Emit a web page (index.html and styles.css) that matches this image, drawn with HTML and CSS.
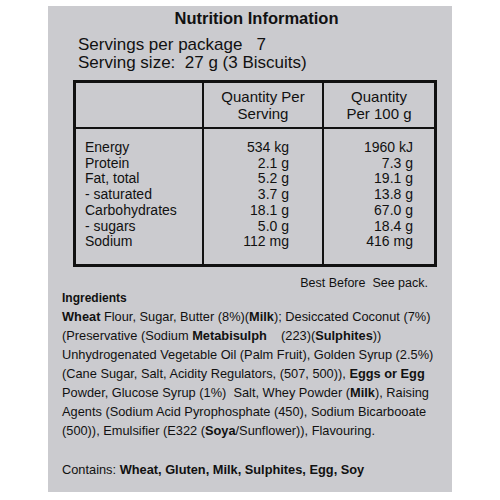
FILE: index.html
```html
<!DOCTYPE html>
<html lang="en">
<head>
  <meta charset="UTF-8">
  <title>Nutrition Information</title>
  <link rel="stylesheet" href="styles.css">
</head>
<body>

<div class="label">
  <h1>Nutrition Information</h1>

  <div class="servings">
    <div>Servings per package&nbsp;&nbsp; 7</div>
    <div>Serving size:&nbsp; 27 g (3 Biscuits)</div>
  </div>

  <table class="panel">
    <tr class="head">
      <th></th>
      <th>Quantity Per<br>Serving</th>
      <th>Quantity<br>Per 100 g</th>
    </tr>
    <tr class="rows">
      <td class="names">
        Energy<br>Protein<br>Fat, total<br>- saturated<br>Carbohydrates<br>- sugars<br>Sodium
      </td>
      <td class="serve">
        534 kg<br>2.1 g<br>5.2 g<br>3.7 g<br>18.1 g<br>5.0 g<br>112 mg
      </td>
      <td class="hundred">
        1960 kJ<br>7.3 g<br>19.1 g<br>13.8 g<br>67.0 g<br>18.4 g<br>416 mg
      </td>
    </tr>
  </table>

  <p class="best">Best Before&nbsp; See pack.</p>

  <h2>Ingredients</h2>
  <p class="ingr">
    <b>Wheat</b> Flour, Sugar, Butter (8%)(<b>Milk</b>); Desiccated Coconut (7%)<br>
    (Preservative (Sodium <b>Metabisulph</b>&nbsp;&nbsp;&nbsp; (223)(<b>Sulphites</b>))<br>
    Unhydrogenated Vegetable Oil (Palm Fruit), Golden Syrup (2.5%)<br>
    (Cane Sugar, Salt, Acidity Regulators, (507, 500)), <b>Eggs or Egg</b><br>
    Powder, Glucose Syrup (1%)&nbsp; Salt, Whey Powder (<b>Milk</b>), Raising<br>
    Agents (Sodium Acid Pyrophosphate (450), Sodium Bicarbooate<br>
    (500)), Emulsifier (E322 (<b>Soya</b>/Sunflower)), Flavouring.
  </p>

  <p class="contains">Contains: <b>Wheat, Gluten, Milk, Sulphites, Egg, Soy</b></p>
</div>

</body>
</html>
```

FILE: styles.css
```css
body {
  margin: 0;
  background-color: #fff;
  color: #111;
  font-family: "Liberation Sans", Arial, sans-serif;
}

.label {
  width: 404px;
  height: 486px;
  margin: 6px 0 0 48px;
  padding-top: 2px;
  box-sizing: border-box;
  background-color: #cbcbcf;
}

h1 {
  margin: 0;
  font-size: 16.5px;
  line-height: 20px;
  text-align: center;
  padding-left: 13px;
}

.servings {
  margin: 8px 0 0 30px;
  font-size: 17px;
  line-height: 18px;
}

.panel {
  margin: 8px 0 0 25px;
  border-collapse: collapse;
  border: 3px solid #111;
}

.panel th,
.panel td {
  border: 2px solid #111;
  padding: 0;
}

.panel th {
  height: 44px;
  font-size: 15px;
  line-height: 17.5px;
  font-weight: normal;
  text-align: center;
}

.panel th:nth-child(1) { width: 126px; }
.panel th:nth-child(2) { width: 118px; }
.panel th:nth-child(3) { width: 110px; }

.rows td {
  height: 137px;
  vertical-align: top;
  padding-top: 11px;
  font-size: 14px;
  line-height: 15.7px;
  box-sizing: border-box;
}

.names {
  padding-left: 9px !important;
}

.serve {
  text-align: right;
  padding-right: 33px !important;
}

.hundred {
  text-align: right;
  padding-right: 21px !important;
}

.best {
  margin: 9px 24px 0 0;
  font-size: 12.5px;
  line-height: 14px;
  text-align: right;
}

h2 {
  margin: 0 0 0 14px;
  font-size: 12px;
  line-height: 16px;
}

.ingr {
  margin: 1px 0 0 14px;
  font-size: 12.8px;
  line-height: 19px;
}

.contains {
  margin: 20px 0 0 14px;
  font-size: 12.8px;
  line-height: 19px;
}
```
